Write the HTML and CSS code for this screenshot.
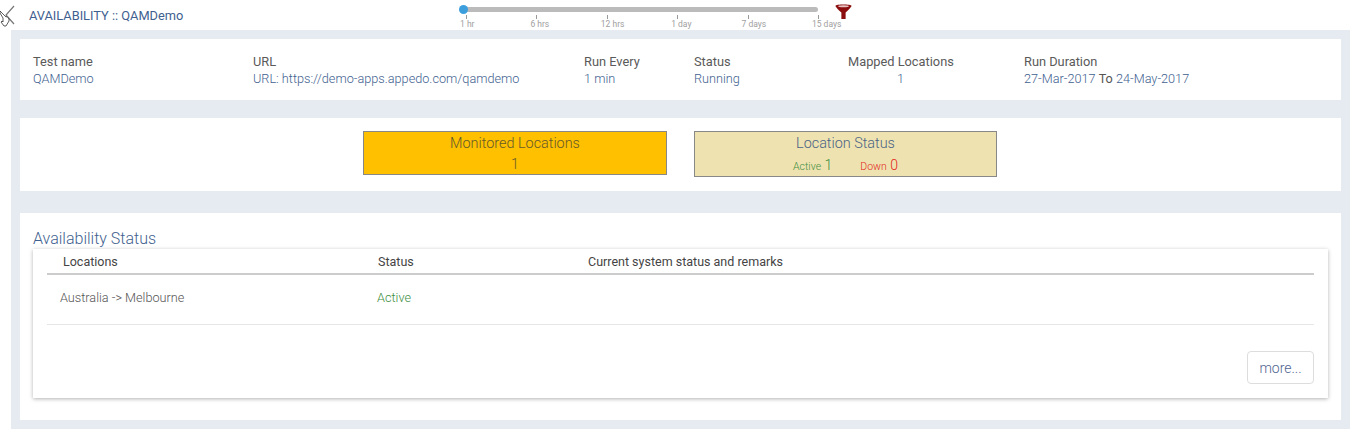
FILE: index.html
```html
<!DOCTYPE html>
<html lang="en">

<head>
    <meta charset="UTF-8">
    <meta name="viewport" content="width=device-width, initial-scale=1.0">
    <title>Availability</title>
    <link rel="stylesheet" href="styles.css">
</head>

<body>
    <header class="topbar">
        <svg class="back-icon" width="16" height="26" viewBox="0 0 16 26">
            <path d="M14 5L6 14L14 23" fill="none" stroke="#777" stroke-width="1.2"/>
            <path d="M0 10L6 16L7 15.500L9 18L9 20L6 25L4 25L1 21L2 20L3 21L3 17L0 12Z" fill="#fff" stroke="#333" stroke-width="0.8"/>
        </svg>
        <span class="page-title">AVAILABILITY :: QAMDemo</span>
        <div class="slider">
            <div class="track"><span class="thumb"></span></div>
            <div class="ticks">
                <span class="tick">1 hr</span>
                <span class="tick">6 hrs</span>
                <span class="tick">12 hrs</span>
                <span class="tick">1 day</span>
                <span class="tick">7 days</span>
                <span class="tick">15 days</span>
            </div>
        </div>
        <svg class="filter-icon" width="17" height="17" viewBox="0 0 16 16">
            <path d="M0.500 2.500C0.500 1 15.500 1 15.500 2.500C15.500 3.500 14 5 10 9L10 15L6 15L6 9C2 5 0.500 3.500 0.500 2.500Z" fill="#8b0d0d"/>
            <ellipse cx="8" cy="3" rx="5" ry="1" fill="#e8c4c4"/>
        </svg>
    </header>

    <main class="panel">
        <section class="card summary">
            <div class="field">
                <div class="label">Test name</div>
                <div class="value">QAMDemo</div>
            </div>
            <div class="field">
                <div class="label">URL</div>
                <div class="value">URL: https://demo-apps.appedo.com/qamdemo</div>
            </div>
            <div class="field">
                <div class="label">Run Every</div>
                <div class="value">1 min</div>
            </div>
            <div class="field">
                <div class="label">Status</div>
                <div class="value">Running</div>
            </div>
            <div class="field mapped">
                <div class="label">Mapped Locations</div>
                <div class="value">1</div>
            </div>
            <div class="field">
                <div class="label">Run Duration</div>
                <div class="value">27-Mar-2017 <span class="to">To</span> 24-May-2017</div>
            </div>
        </section>

        <section class="card tiles">
            <div class="tile tile-monitored">
                <div class="tile-title">Monitored Locations</div>
                <div class="tile-count">1</div>
            </div>
            <div class="tile tile-status">
                <div class="tile-title">Location Status</div>
                <div class="tile-row">
                    <span class="active"><small>Active</small> 1</span>
                    <span class="down"><small>Down</small> 0</span>
                </div>
            </div>
        </section>

        <section class="card status-card">
            <h3>Availability Status</h3>
            <div class="table-box">
                <div class="row head">
                    <div class="col-loc">Locations</div>
                    <div class="col-status">Status</div>
                    <div>Current system status and remarks</div>
                </div>
                <div class="row body-row">
                    <div class="col-loc">Australia -&gt; Melbourne</div>
                    <div class="col-status active">Active</div>
                    <div></div>
                </div>
                <div class="actions">
                    <button class="more">more...</button>
                </div>
            </div>
        </section>
    </main>
</body>

</html>
```

FILE: styles.css
```css
html, body {
    height: 100%;
    overflow: hidden;
}

body {
    margin: 0;
    font-family: Roboto, Arial, sans-serif;
    background-color: #fff;
    color: #555;
    font-size: 13px;
}

.topbar {
    height: 30px;
    display: flex;
    align-items: flex-start;
}

.back-icon {
    margin-top: 1px;
    width: 16px;
    flex: none;
}

.page-title {
    margin: 9px 0 0 13px;
    width: 429px;
    font-size: 12.800px;
    line-height: 14px;
    color: #3f5f90;
}

.slider {
    width: 378px;
    padding-top: 7px;
}

.track {
    position: relative;
    width: 355px;
    height: 5px;
    margin-left: 5px;
    background-color: #bbb;
    border-radius: 3px;
}

.thumb {
    position: absolute;
    left: -4px;
    top: -2px;
    width: 9px;
    height: 9px;
    border-radius: 50%;
    background-color: #3c9fdc;
}

.ticks {
    display: flex;
    margin: 3px 0 0 2px;
}

.tick {
    width: 70.400px;
    flex: none;
    font-size: 8.500px;
    line-height: 9px;
    white-space: nowrap;
    color: #a0a0a0;
    padding-top: 5px;
    background: linear-gradient(#999, #999) 6px top / 1px 4px no-repeat;
}

.filter-icon {
    margin: 3px 0 0 -1px;
}

.panel {
    margin: 0 7px 0 11px;
    height: 381px;
    padding: 9px;
    background-color: #e6ebf2;
}

.card {
    background-color: #fff;
}

.summary {
    height: 61px;
    box-sizing: border-box;
    padding: 14px 0 0 13px;
    display: grid;
    grid-template-columns: 220px 331px 110px 154px 176px 1fr;
}

.label {
    font-size: 12.800px;
    line-height: 17px;
    color: #5a5a5a;
}

.value {
    font-size: 12.700px;
    line-height: 17px;
    color: #3f5f90;
    font-weight: 300;
}

.value .to {
    color: #555;
    font-weight: 400;
}

.mapped {
    width: 105px;
    white-space: nowrap;
    text-align: center;
}

.tiles {
    margin-top: 18px;
    height: 73px;
    box-sizing: border-box;
    padding: 13px 0 0 343px;
    display: flex;
    align-items: flex-start;
    gap: 27px;
}

.tile {
    box-sizing: border-box;
    border: 1px solid #888;
    text-align: center;
    font-weight: 300;
}

.tile-title {
    font-size: 14.400px;
    line-height: 20px;
    margin-top: 2px;
}

.tile-monitored {
    width: 304px;
    height: 44px;
    background-color: #ffc000;
    color: #665a2a;
}

.tile-count {
    font-size: 14px;
    line-height: 20px;
}

.tile-status {
    width: 303px;
    height: 46px;
    background-color: #eee3b0;
    color: #4a6285;
}

.tile-row {
    display: flex;
    justify-content: center;
    gap: 28px;
    margin-top: 1px;
    font-size: 14px;
    line-height: 20px;
}

.tile-row small {
    font-size: 10.500px;
}

.active {
    color: #3e8e41;
}

.down {
    color: #e3261b;
}

.status-card {
    margin-top: 22px;
    height: 207px;
    box-sizing: border-box;
    padding: 16px 13px 0;
}

.status-card h3 {
    margin: 0;
    font-size: 16px;
    line-height: 20px;
    font-weight: 300;
    color: #3f5f90;
}

.table-box {
    height: 149px;
    box-sizing: border-box;
    padding: 0 14px;
    background-color: #fff;
    box-shadow: 0 1px 4px rgba(0, 0, 0, 0.3);
}

.row {
    display: grid;
    grid-template-columns: 315px 210px 1fr;
}

.head {
    height: 26px;
    line-height: 25px;
    border-bottom: 2px solid #ccc;
    box-sizing: border-box;
    padding-left: 16px;
    font-size: 12.500px;
    color: #444;
}

.body-row {
    height: 50px;
    box-sizing: border-box;
    border-bottom: 1px solid #e6e6e6;
    padding-left: 13px;
    line-height: 46px;
    font-size: 12.700px;
    font-weight: 300;
}

.body-row .col-status {
    padding-left: 2px;
}

.actions {
    display: flex;
    justify-content: flex-end;
    padding-top: 26px;
}

.more {
    width: 67px;
    height: 33px;
    padding: 0;
    font-family: inherit;
    font-size: 14px;
    font-weight: 300;
    color: #4f6490;
    background-color: #fff;
    border: 1px solid #ddd;
    border-radius: 4px;
}
```
